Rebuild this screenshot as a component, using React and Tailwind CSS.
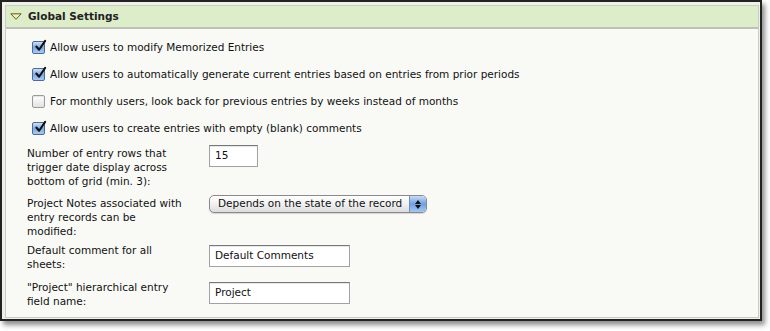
import React from 'react'

function Check({ on }) {
  if (!on) {
    return (
      <span className="inline-block shrink-0 w-[13px] h-[13px] rounded-[2px] border border-[#9a9a9a] bg-gradient-to-b from-white to-[#e2e2e2] shadow-[inset_0_1px_1px_rgba(0,0,0,0.1)]" />
    )
  }
  return (
    <span className="relative inline-block shrink-0 w-[13px] h-[13px] rounded-[2px] border border-[#4a6a9a] bg-gradient-to-b from-[#cfe0f6] via-[#7ea8e0] to-[#a9cbf3]">
      <svg viewBox="0 0 14 14" className="absolute left-[1px] top-[-3px] w-[13px] h-[14px]">
        <path d="M2.5 7.5 L5.5 11 L12 1.5" fill="none" stroke="#111" strokeWidth="2.2" strokeLinecap="round" strokeLinejoin="round" />
      </svg>
    </span>
  )
}

function CheckRow({ on, children }) {
  return (
    <div className="flex items-center h-[27px] pl-[26px] gap-[5px] whitespace-nowrap">
      <Check on={on} />
      <span>{children}</span>
    </div>
  )
}

function TextBox({ value, w }) {
  return (
    <div className={`${w} h-[22px] border border-[#a2a2a2] border-t-[#777] bg-white shadow-[inset_0_1px_1px_rgba(0,0,0,0.1)] flex items-center px-[5px] whitespace-nowrap`}>
      {value}
    </div>
  )
}

function Field({ label, children, h }) {
  return (
    <div className={`flex ${h}`}>
      <div className="w-[182px] leading-[14px] pt-[1px]">{label}</div>
      <div>{children}</div>
    </div>
  )
}

export default function App() {
  return (
    <div className="w-[770px] h-[331px] bg-white" style={{ fontFamily: '"DejaVu Sans", Verdana, sans-serif' }}>
      <div className="w-[762px] h-[321px] border-2 border-[#222] shadow-[3px_4px_5px_rgba(0,0,0,0.45)] bg-[#eef0ea] pt-[3px] pl-[3px] pr-[1px] pb-[1px]">
        <div className="h-full border border-[#c9cdc3] bg-[#f9faf6] flex flex-col text-[10.5px] text-[#111]">
          <div className="h-[23px] shrink-0 bg-[#ddedc9] border-b-2 border-[#bcc2b4] flex items-center pl-[4px] gap-[6px]">
            <svg viewBox="0 0 12 7" className="w-[12px] h-[7px]">
              <path d="M0.8 0.8 L11.2 0.8 L6 6.3 Z" fill="#f4f0a0" stroke="#5e5d30" strokeWidth="1" strokeLinejoin="round" />
            </svg>
            <span className="font-bold text-[#222] pt-[1px]">Global Settings</span>
          </div>
          <div className="pt-[5px]">
            <CheckRow on>Allow users to modify Memorized Entries</CheckRow>
            <CheckRow on>Allow users to automatically generate current entries based on entries from prior periods</CheckRow>
            <CheckRow>For monthly users, look back for previous entries by weeks instead of months</CheckRow>
            <CheckRow on>Allow users to create entries with empty (blank) comments</CheckRow>
          </div>
          <div className="pl-[21px] pt-[3px] flex flex-col">
            <Field label={<>Number of entry rows that<br />trigger date display across<br />bottom of grid (min. 3):</>} h="h-[50px]">
              <TextBox value="15" w="w-[49px]" />
            </Field>
            <Field label={<>Project Notes associated with<br />entry records can be<br />modified:</>} h="h-[47px]">
              <div className="w-[218px] h-[18px] rounded-[5px] border border-[#8a8a8a] bg-gradient-to-b from-white via-[#f1f1f1] to-[#dcdcdc] flex items-stretch overflow-hidden shadow-[0_1px_1px_rgba(0,0,0,0.15)] whitespace-nowrap">
                <span className="flex-1 pl-[8px] flex items-center">Depends on the state of the record</span>
                <span className="w-[17px] border-l border-[#6f8fbf] bg-gradient-to-b from-[#c8dcf5] via-[#6f9fe0] to-[#a6c8f2] flex flex-col items-center justify-center gap-[1px]">
                  <svg viewBox="0 0 6 4" className="w-[6px] h-[4px]"><path d="M0 4 L3 0 L6 4 Z" fill="#111" /></svg>
                  <svg viewBox="0 0 6 4" className="w-[6px] h-[4px]"><path d="M0 0 L3 4 L6 0 Z" fill="#111" /></svg>
                </span>
              </div>
            </Field>
            <Field label={<>Default comment for all<br />sheets:</>} h="h-[37px]">
              <div className="mt-[3px]"><TextBox value="Default Comments" w="w-[141px]" /></div>
            </Field>
            <Field label={<>"Project" hierarchical entry<br />field name:</>} h="h-[37px]">
              <div className="mt-[3px]"><TextBox value="Project" w="w-[141px]" /></div>
            </Field>
          </div>
        </div>
      </div>
    </div>
  )
}
